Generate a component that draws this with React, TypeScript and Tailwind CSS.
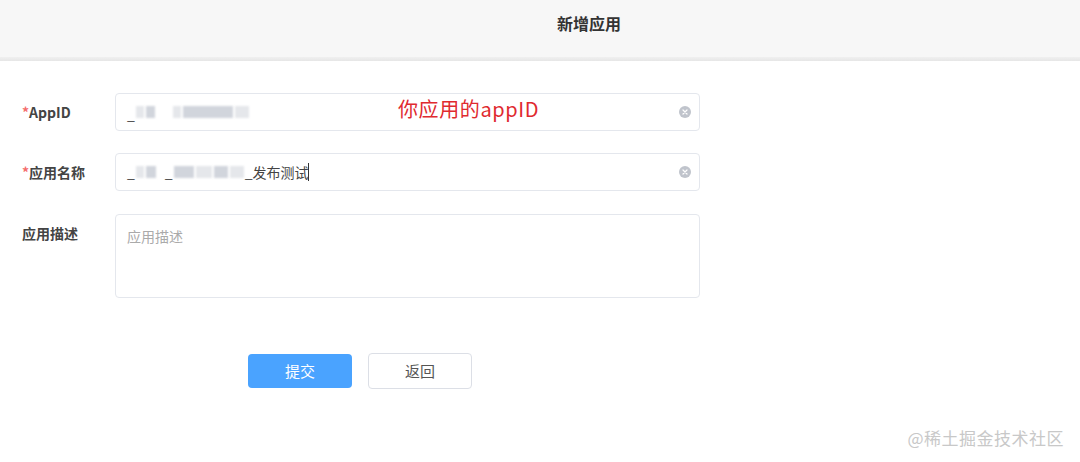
import React from 'react';

const font = { fontFamily: '"Noto Sans CJK SC", "Liberation Sans", sans-serif' };

// blurred (masked) chunks of text in the screenshot
const Smudge: React.FC<{ w: number; tone?: string }> = ({ w, tone = 'bg-gray-300' }) => (
  <span className={`inline-block h-[12px] ${tone} blur-[1px] mx-[1px]`} style={{ width: w }} />
);

const ClearIcon = () => (
  <svg width="12" height="12" viewBox="0 0 12 12" className="absolute right-[8px] top-1/2 -translate-y-1/2">
    <circle cx="6" cy="6" r="6" fill="#c0c4cc" />
    <path d="M4 4 L8 8 M8 4 L4 8" stroke="#fff" strokeWidth="1.2" strokeLinecap="round" />
  </svg>
);

export default function App() {
  return (
    <div className="w-[1080px] h-[462px] bg-white relative overflow-hidden" style={font}>
      <div className="h-[57px] bg-[#f7f7f7] flex items-center justify-center">
        <span className="text-[16px] font-bold text-[#333] ml-[98px] -mt-[12px]">新增应用</span>
      </div>
      <div className="h-[4px] bg-gradient-to-b from-[#f0f0f0] to-[#e6e6e6]" />

      <div className="pt-[32px] pl-[22px]">
        <div className="flex items-center h-[38px]">
          <label className="w-[93px] text-[14px] font-bold text-[#444]">
            <span className="text-[#f56c6c]">*</span>AppID
          </label>
          <div className="relative w-[585px] h-[38px] border border-[#e4e7ed] rounded-[4px] flex items-center px-[11px]">
            <span className="text-[14px] text-[#444] mt-[4px]">_</span>
            <Smudge w={8} tone="bg-gray-200" />
            <Smudge w={9} tone="bg-gray-300" />
            <span className="w-[16px]" />
            <Smudge w={8} tone="bg-gray-200" />
            <Smudge w={50} tone="bg-gray-300" />
            <Smudge w={14} tone="bg-gray-200" />
            <ClearIcon />
            <span className="absolute left-[282px] top-[0px] text-[20px] tracking-[0.6px] text-[#e02a2f]">你应用的appID</span>
          </div>
        </div>

        <div className="flex items-center h-[38px] mt-[22px]">
          <label className="w-[93px] text-[14px] font-bold text-[#444]">
            <span className="text-[#f56c6c]">*</span>应用名称
          </label>
          <div className="relative w-[585px] h-[38px] border border-[#e4e7ed] rounded-[4px] flex items-center px-[11px] text-[14px] text-[#444]">
            <span>_</span>
            <Smudge w={8} tone="bg-gray-200" />
            <Smudge w={10} tone="bg-gray-300" />
            <span className="ml-[8px]">_</span>
            <Smudge w={20} tone="bg-gray-300" />
            <Smudge w={16} tone="bg-gray-200" />
            <Smudge w={14} tone="bg-gray-300" />
            <Smudge w={14} tone="bg-gray-200" />
            <span>_发布测试</span>
            <span className="inline-block w-[1px] h-[18px] bg-[#333]" />
            <ClearIcon />
          </div>
        </div>

        <div className="flex items-start mt-[23px]">
          <label className="w-[93px] text-[14px] font-bold text-[#444] pt-[9px]">应用描述</label>
          <div className="w-[585px] h-[84px] border border-[#e4e7ed] rounded-[4px] px-[11px] pt-[11px] text-[14px] text-[#aaa]">
            应用描述
          </div>
        </div>

        <div className="flex items-center gap-[16px] ml-[226px] mt-[55px]">
          <button className="w-[104px] h-[34px] bg-[#4aa3ff] rounded-[4px] text-white text-[15px]">提交</button>
          <button className="w-[104px] h-[36px] bg-white border border-[#dcdfe6] rounded-[4px] text-[#555] text-[15px]">返回</button>
        </div>
      </div>

      <div className="absolute right-[16px] bottom-[12px] text-[17px] tracking-[0.5px] text-[#c8c8c8]">@稀土掘金技术社区</div>
    </div>
  );
}
